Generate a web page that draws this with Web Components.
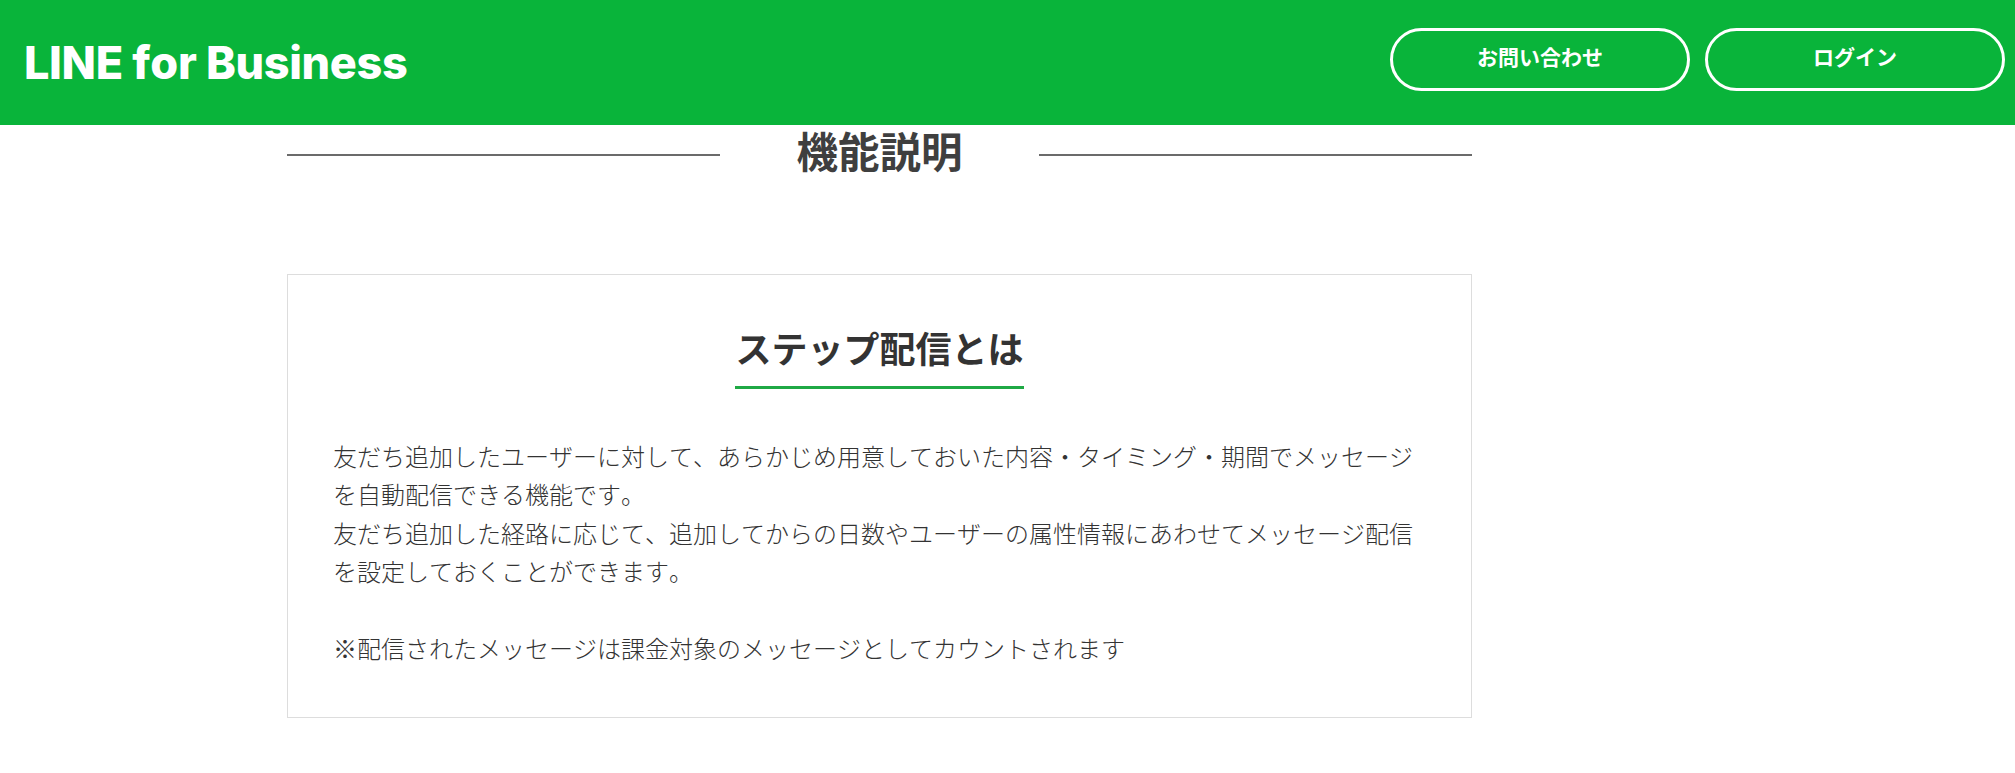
<!DOCTYPE html>
<html lang="ja">
<head>
<meta charset="utf-8">
<title>LINE for Business</title>
<style>
  html, body { margin: 0; background: #fff; }
  body { font-family: 'Noto Sans CJK JP', sans-serif; color: #333; overflow: hidden; font-kerning: none; }
</style>
</head>
<body>
<lfb-header>
  <lfb-button slot="actions">お問い合わせ</lfb-button>
  <lfb-button slot="actions">ログイン</lfb-button>
</lfb-header>
<lfb-page>
  <lfb-section-title>機能説明</lfb-section-title>
  <lfb-card heading="ステップ配信とは">
    友だち追加したユーザーに対して、あらかじめ用意しておいた内容・タイミング・期間でメッセージを自動配信できる機能です。<br>
    友だち追加した経路に応じて、追加してからの日数やユーザーの属性情報にあわせてメッセージ配信を設定しておくことができます。<br><br>
    ※配信されたメッセージは課金対象のメッセージとしてカウントされます
  </lfb-card>
</lfb-page>

<script>
class LfbHeader extends HTMLElement {
  constructor() {
    super();
    this.attachShadow({ mode: 'open' });
    this.shadowRoot.innerHTML = `
      <style>
        :host {
          display: flex;
          align-items: center;
          justify-content: space-between;
          height: 125px;
          padding: 0 10px 0 24px;
          background: #09b43a;
        }
        .logo {
          font-family: Inter, sans-serif;
          font-size: 45px;
          font-weight: 800;
          letter-spacing: -0.35px;
          color: #fff;
          line-height: 1;
        }
        .actions {
          display: flex;
          gap: 15px;
          margin-bottom: 6px;
        }
      </style>
      <div class="logo">LINE for Business</div>
      <div class="actions"><slot name="actions"></slot></div>
    `;
  }
}

class LfbButton extends HTMLElement {
  constructor() {
    super();
    this.attachShadow({ mode: 'open' });
    this.shadowRoot.innerHTML = `
      <style>
        :host {
          display: flex;
          align-items: center;
          justify-content: center;
          box-sizing: border-box;
          width: 300px;
          height: 63px;
          padding-bottom: 8px;
          border: 3px solid #fff;
          border-radius: 32px;
          color: #fff;
          font-size: 21px;
          font-weight: 700;
          cursor: pointer;
        }
      </style>
      <slot></slot>
    `;
  }
}

class LfbPage extends HTMLElement {
  constructor() {
    super();
    this.attachShadow({ mode: 'open' });
    this.shadowRoot.innerHTML = `
      <style>
        :host {
          display: block;
          width: 1185px;
          margin-left: 287px;
        }
      </style>
      <slot></slot>
    `;
  }
}

class LfbSectionTitle extends HTMLElement {
  constructor() {
    super();
    this.attachShadow({ mode: 'open' });
    this.shadowRoot.innerHTML = `
      <style>
        :host {
          display: flex;
          align-items: center;
          height: 60px;
          margin-bottom: 89px;
          color: #3f3f3f;
          font-size: 41.5px;
          font-weight: 700;
        }
        .rule {
          flex: 1;
          height: 2px;
          background: #6b6b6b;
        }
        .text {
          align-self: flex-start;
          width: 319px;
          text-align: center;
          line-height: 50px;
        }
      </style>
      <div class="rule"></div>
      <div class="text"><slot></slot></div>
      <div class="rule"></div>
    `;
  }
}

class LfbCard extends HTMLElement {
  constructor() {
    super();
    this.attachShadow({ mode: 'open' });
    this.shadowRoot.innerHTML = `
      <style>
        :host {
          display: block;
          box-sizing: border-box;
          height: 444px;
          padding: 46px 45px 0;
          border: 1px solid #ddd;
        }
        .head {
          display: flex;
          justify-content: center;
        }
        h2 {
          margin: 0;
          padding-bottom: 12px;
          border-bottom: 3px solid #1fa945;
          color: #333;
          font-size: 36px;
          font-weight: 700;
          line-height: 53px;
        }
        .body {
          margin-top: 48px;
          color: #333;
          font-size: 24px;
          font-weight: 300;
          line-height: 38.4px;
        }
      </style>
      <div class="head"><h2></h2></div>
      <div class="body"><slot></slot></div>
    `;
    this.shadowRoot.querySelector('h2').textContent = this.getAttribute('heading');
  }
}

customElements.define('lfb-header', LfbHeader);
customElements.define('lfb-button', LfbButton);
customElements.define('lfb-page', LfbPage);
customElements.define('lfb-section-title', LfbSectionTitle);
customElements.define('lfb-card', LfbCard);
</script>
</body>
</html>
